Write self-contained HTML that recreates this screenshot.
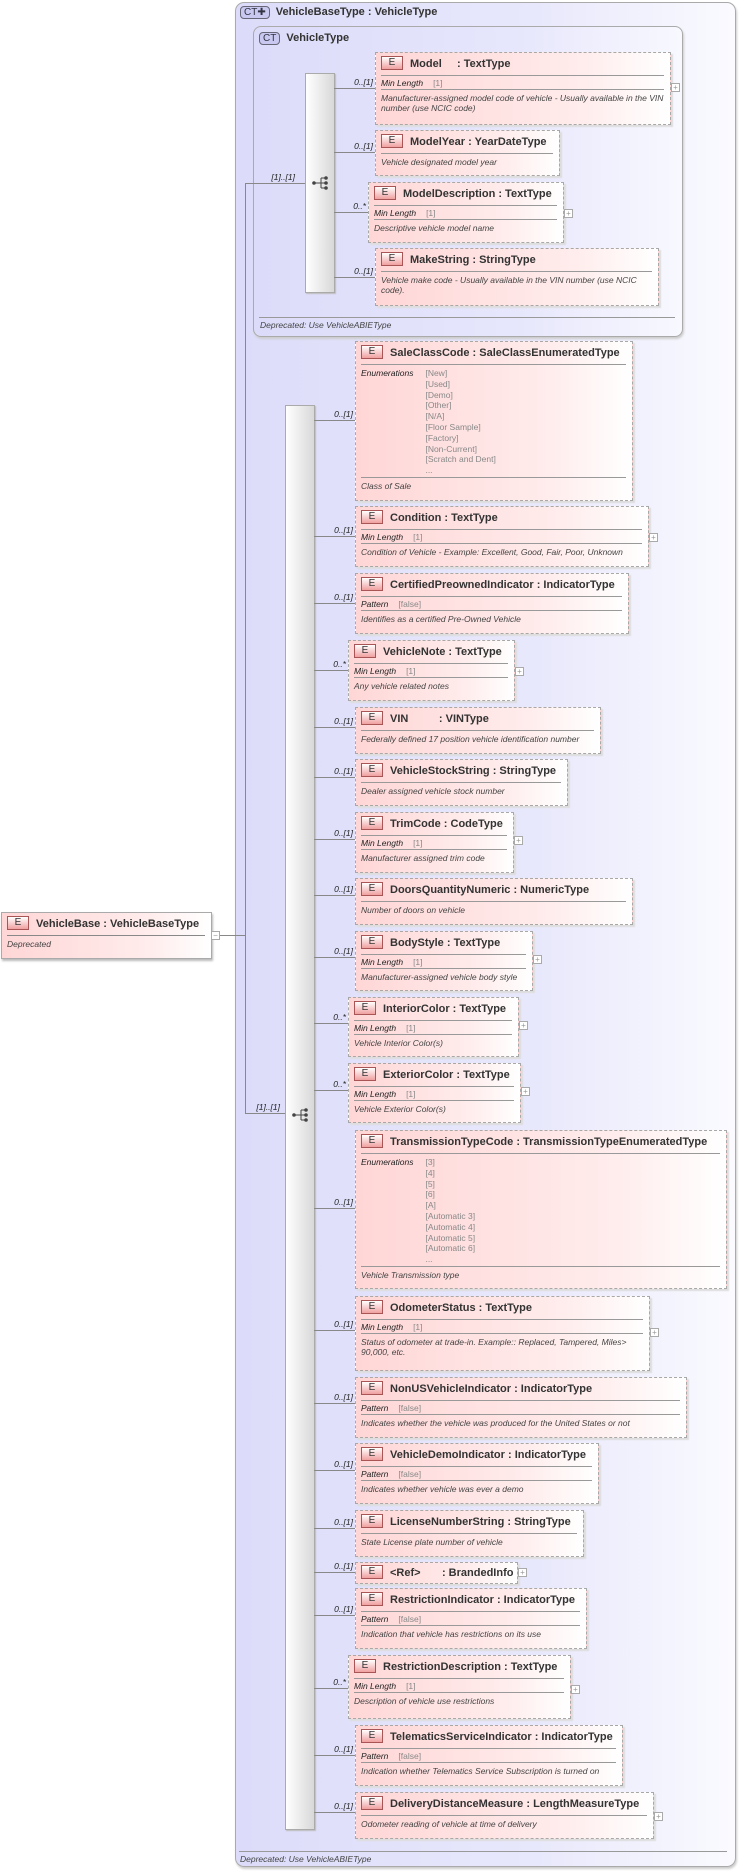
<!DOCTYPE html>
<html><head><meta charset="utf-8"><style>
body{margin:0;width:739px;height:1872px;background:#fff;position:relative;overflow:hidden;font-family:"Liberation Sans",Arial,sans-serif;color:#222}
.abs{position:absolute}
.outer{position:absolute;left:235px;top:2px;width:499px;height:1863px;border:1px solid #aaa;border-radius:9px;background:linear-gradient(to right,#dcdcfa,#e8e8fc 60%,#fafaff);box-shadow:1px 2px 2px #ccc}
.inner{position:absolute;left:253px;top:26px;width:428px;height:309px;border:1px solid #aaa;border-radius:8px;background:linear-gradient(to right,#dcdcfa,#e6e6fc 60%,#f8f8ff);box-shadow:1px 2px 2px #ccc}
.ct{position:absolute;font-size:11px;font-weight:bold;color:#333}
.ctb{display:inline-block;border:1px solid #667;border-radius:4px;background:#c8c8f0;font-weight:normal;font-size:10px;padding:0 3px;margin-right:6px;color:#334}
.bar{position:absolute;width:28px;border:1px solid #aaa;background:linear-gradient(to right,#fff,#d8d8d8);box-shadow:1px 1px 1px #bbb}
.e{position:absolute;border:1px dashed #a8a8a8;background:linear-gradient(to right,#ffd6d6,#ffecec 70%,#fff);box-shadow:2px 2px 1px #ddd;font-size:8.5px}
.h{height:22px;line-height:22px;font-size:11px;font-weight:bold;color:#333;white-space:nowrap;padding-left:5px}
.E{display:inline-block;width:20px;height:12px;line-height:12px;text-align:center;border:1px solid #a55;background:linear-gradient(#fff,#f0a0a0);font-weight:normal;font-size:10px;margin-right:7px;vertical-align:middle;position:relative;top:-1px}
.f{border-top:1px solid #999;margin:0 6px 0 5px;padding:2px 0 1px;font-style:italic;color:#222;white-space:nowrap;line-height:10px}
.f span{font-style:normal;color:#888;margin-left:10px;display:inline-block;vertical-align:top}
.d{border-top:1px solid #999;margin:0 6px 0 5px;padding:3px 0 2px;font-style:italic;color:#444;line-height:10px}
.ln{position:absolute;background:#888}
.lb{position:absolute;font-size:8.5px;font-style:italic;width:40px;text-align:right;color:#222}
.pl{position:absolute;width:7px;height:7px;border:1px solid #aaa;background:#fff;font-size:8px;line-height:7px;text-align:center;color:#999}
.ic{position:absolute;width:20px;height:14px}
</style></head><body>

<div class="outer"></div>
<div class="ct" style="left:240px;top:6px"><span class="ctb">CT✚</span>VehicleBaseType : VehicleType</div>
<div class="inner"></div>
<div class="ct" style="left:259px;top:32px"><span class="ctb">CT</span>VehicleType</div>
<div class="abs" style="left:259px;top:317px;width:416px;border-top:1px solid #999"></div>
<div class="abs" style="left:260px;top:320px;font-size:8.5px;font-style:italic;color:#444">Deprecated: Use VehicleABIEType</div>
<div class="abs" style="left:239px;top:1851px;width:488px;border-top:1px solid #999"></div>
<div class="abs" style="left:240px;top:1854px;font-size:8.5px;font-style:italic;color:#444">Deprecated: Use VehicleABIEType</div>

<!-- VehicleBase -->
<div class="e" style="left:1px;top:912px;width:209px;height:45px;border-style:solid;border-color:#aaa;box-shadow:1px 2px 2px #bbb"><div class="h"><b class="E">E</b>VehicleBase : VehicleBaseType</div><div class="d" style="border-top-color:#888">Deprecated</div></div>
<div class="pl" style="left:211px;top:931px">−</div>
<div class="ln" style="left:220px;top:935px;width:25px;height:1px"></div>
<div class="ln" style="left:245px;top:183px;width:1px;height:931px"></div>
<div class="ln" style="left:245px;top:183px;width:60px;height:1px"></div>
<div class="ln" style="left:245px;top:1113px;width:40px;height:1px"></div>
<div class="lb" style="left:255px;top:172px">[1]..[1]</div>
<div class="lb" style="left:240px;top:1102px">[1]..[1]</div>

<div class="bar" style="left:305px;top:73px;height:218px"></div>
<div class="bar" style="left:285px;top:405px;height:1423px"></div>
<svg class="ic" style="left:311px;top:176px" viewBox="0 0 20 14"><circle cx="3" cy="7" r="1.8" fill="#444"/><line x1="3" y1="7" x2="10" y2="7" stroke="#444"/><line x1="10" y1="2" x2="10" y2="12" stroke="#444"/><line x1="10" y1="2" x2="15" y2="2" stroke="#444"/><line x1="10" y1="12" x2="15" y2="12" stroke="#444"/><line x1="10" y1="7" x2="15" y2="7" stroke="#444"/><circle cx="15" cy="2" r="1.8" fill="#444"/><circle cx="15" cy="7" r="1.8" fill="#444"/><circle cx="15" cy="12" r="1.8" fill="#444"/></svg>
<svg class="ic" style="left:291px;top:1108px" viewBox="0 0 20 14"><circle cx="3" cy="7" r="1.8" fill="#444"/><line x1="3" y1="7" x2="10" y2="7" stroke="#444"/><line x1="10" y1="2" x2="10" y2="12" stroke="#444"/><line x1="10" y1="2" x2="15" y2="2" stroke="#444"/><line x1="10" y1="12" x2="15" y2="12" stroke="#444"/><line x1="10" y1="7" x2="15" y2="7" stroke="#444"/><circle cx="15" cy="2" r="1.8" fill="#444"/><circle cx="15" cy="7" r="1.8" fill="#444"/><circle cx="15" cy="12" r="1.8" fill="#444"/></svg>

<!-- VehicleType children -->
<div class="ln" style="left:334px;top:88px;width:41px;height:1px"></div><div class="lb" style="left:333px;top:77px">0..[1]</div>
<div class="e" style="left:375px;top:52px;width:294px;height:71px"><div class="h"><b class="E">E</b>Model &nbsp;&nbsp;&nbsp; : TextType</div><div class="f">Min Length<span>[1]</span></div><div class="d">Manufacturer-assigned model code of vehicle - Usually available in the VIN number (use NCIC code)</div></div>
<div class="pl" style="left:671px;top:83px">+</div>

<div class="ln" style="left:334px;top:152px;width:41px;height:1px"></div><div class="lb" style="left:333px;top:141px">0..[1]</div>
<div class="e" style="left:375px;top:130px;width:183px;height:44px"><div class="h"><b class="E">E</b>ModelYear : YearDateType</div><div class="d">Vehicle designated model year</div></div>

<div class="ln" style="left:334px;top:212px;width:34px;height:1px"></div><div class="lb" style="left:326px;top:201px">0..*</div>
<div class="e" style="left:368px;top:182px;width:194px;height:59px"><div class="h"><b class="E">E</b>ModelDescription : TextType</div><div class="f">Min Length<span>[1]</span></div><div class="d">Descriptive vehicle model name</div></div>
<div class="pl" style="left:564px;top:209px">+</div>

<div class="ln" style="left:334px;top:277px;width:41px;height:1px"></div><div class="lb" style="left:333px;top:266px">0..[1]</div>
<div class="e" style="left:375px;top:248px;width:282px;height:56px"><div class="h"><b class="E">E</b>MakeString : StringType</div><div class="d">Vehicle make code - Usually available in the VIN number (use NCIC code).</div></div>

<!-- main sequence children -->
<div class="ln" style="left:314px;top:420px;width:41px;height:1px"></div><div class="lb" style="left:313px;top:409px">0..[1]</div>
<div class="e" style="left:355px;top:341px;width:276px;height:158px"><div class="h"><b class="E">E</b>SaleClassCode : SaleClassEnumeratedType</div><div class="f" style="padding-top:3px;line-height:10.8px">Enumerations<span style="margin-left:12px">[New]<br>[Used]<br>[Demo]<br>[Other]<br>[N/A]<br>[Floor Sample]<br>[Factory]<br>[Non-Current]<br>[Scratch and Dent]<br>...</span></div><div class="d">Class of Sale</div></div>

<div class="ln" style="left:314px;top:536px;width:41px;height:1px"></div><div class="lb" style="left:313px;top:525px">0..[1]</div>
<div class="e" style="left:355px;top:506px;width:292px;height:59px"><div class="h"><b class="E">E</b>Condition : TextType</div><div class="f">Min Length<span>[1]</span></div><div class="d">Condition of Vehicle - Example: Excellent, Good, Fair, Poor, Unknown</div></div>
<div class="pl" style="left:649px;top:533px">+</div>

<div class="ln" style="left:314px;top:603px;width:41px;height:1px"></div><div class="lb" style="left:313px;top:592px">0..[1]</div>
<div class="e" style="left:355px;top:573px;width:272px;height:59px"><div class="h"><b class="E">E</b>CertifiedPreownedIndicator : IndicatorType</div><div class="f">Pattern<span>[false]</span></div><div class="d">Identifies as a certified Pre-Owned Vehicle</div></div>

<div class="ln" style="left:314px;top:670px;width:34px;height:1px"></div><div class="lb" style="left:306px;top:659px">0..*</div>
<div class="e" style="left:348px;top:640px;width:165px;height:59px"><div class="h"><b class="E">E</b>VehicleNote : TextType</div><div class="f">Min Length<span>[1]</span></div><div class="d">Any vehicle related notes</div></div>
<div class="pl" style="left:515px;top:667px">+</div>

<div class="ln" style="left:314px;top:727px;width:41px;height:1px"></div><div class="lb" style="left:313px;top:716px">0..[1]</div>
<div class="e" style="left:355px;top:707px;width:244px;height:45px"><div class="h"><b class="E">E</b>VIN &nbsp;&nbsp;&nbsp;&nbsp;&nbsp;&nbsp;&nbsp;&nbsp; : VINType</div><div class="d">Federally defined 17 position vehicle identification number</div></div>

<div class="ln" style="left:314px;top:777px;width:41px;height:1px"></div><div class="lb" style="left:313px;top:766px">0..[1]</div>
<div class="e" style="left:355px;top:759px;width:211px;height:45px"><div class="h"><b class="E">E</b>VehicleStockString : StringType</div><div class="d">Dealer assigned vehicle stock number</div></div>

<div class="ln" style="left:314px;top:839px;width:41px;height:1px"></div><div class="lb" style="left:313px;top:828px">0..[1]</div>
<div class="e" style="left:355px;top:812px;width:157px;height:59px"><div class="h"><b class="E">E</b>TrimCode : CodeType</div><div class="f">Min Length<span>[1]</span></div><div class="d">Manufacturer assigned trim code</div></div>
<div class="pl" style="left:514px;top:836px">+</div>

<div class="ln" style="left:314px;top:895px;width:41px;height:1px"></div><div class="lb" style="left:313px;top:884px">0..[1]</div>
<div class="e" style="left:355px;top:878px;width:276px;height:45px"><div class="h"><b class="E">E</b>DoorsQuantityNumeric : NumericType</div><div class="d">Number of doors on vehicle</div></div>

<div class="ln" style="left:314px;top:957px;width:41px;height:1px"></div><div class="lb" style="left:313px;top:946px">0..[1]</div>
<div class="e" style="left:355px;top:931px;width:176px;height:58px"><div class="h"><b class="E">E</b>BodyStyle : TextType</div><div class="f">Min Length<span>[1]</span></div><div class="d">Manufacturer-assigned vehicle body style</div></div>
<div class="pl" style="left:533px;top:955px">+</div>

<div class="ln" style="left:314px;top:1023px;width:34px;height:1px"></div><div class="lb" style="left:306px;top:1012px">0..*</div>
<div class="e" style="left:348px;top:997px;width:169px;height:58px"><div class="h"><b class="E">E</b>InteriorColor : TextType</div><div class="f">Min Length<span>[1]</span></div><div class="d">Vehicle Interior Color(s)</div></div>
<div class="pl" style="left:519px;top:1021px">+</div>

<div class="ln" style="left:314px;top:1090px;width:34px;height:1px"></div><div class="lb" style="left:306px;top:1079px">0..*</div>
<div class="e" style="left:348px;top:1063px;width:171px;height:58px"><div class="h"><b class="E">E</b>ExteriorColor : TextType</div><div class="f">Min Length<span>[1]</span></div><div class="d">Vehicle Exterior Color(s)</div></div>
<div class="pl" style="left:521px;top:1087px">+</div>

<div class="ln" style="left:314px;top:1208px;width:41px;height:1px"></div><div class="lb" style="left:313px;top:1197px">0..[1]</div>
<div class="e" style="left:355px;top:1130px;width:370px;height:157px"><div class="h"><b class="E">E</b>TransmissionTypeCode : TransmissionTypeEnumeratedType</div><div class="f" style="padding-top:3px;line-height:10.8px">Enumerations<span style="margin-left:12px">[3]<br>[4]<br>[5]<br>[6]<br>[A]<br>[Automatic 3]<br>[Automatic 4]<br>[Automatic 5]<br>[Automatic 6]<br>...</span></div><div class="d">Vehicle Transmission type</div></div>

<div class="ln" style="left:314px;top:1330px;width:41px;height:1px"></div><div class="lb" style="left:313px;top:1319px">0..[1]</div>
<div class="e" style="left:355px;top:1296px;width:293px;height:73px"><div class="h"><b class="E">E</b>OdometerStatus : TextType</div><div class="f">Min Length<span>[1]</span></div><div class="d">Status of odometer at trade-in. Example:: Replaced, Tampered, Miles&gt; 90,000, etc.</div></div>
<div class="pl" style="left:650px;top:1328px">+</div>

<div class="ln" style="left:314px;top:1403px;width:41px;height:1px"></div><div class="lb" style="left:313px;top:1392px">0..[1]</div>
<div class="e" style="left:355px;top:1377px;width:330px;height:59px"><div class="h"><b class="E">E</b>NonUSVehicleIndicator : IndicatorType</div><div class="f">Pattern<span>[false]</span></div><div class="d">Indicates whether the vehicle was produced for the United States or not</div></div>

<div class="ln" style="left:314px;top:1470px;width:41px;height:1px"></div><div class="lb" style="left:313px;top:1459px">0..[1]</div>
<div class="e" style="left:355px;top:1443px;width:242px;height:59px"><div class="h"><b class="E">E</b>VehicleDemoIndicator : IndicatorType</div><div class="f">Pattern<span>[false]</span></div><div class="d">Indicates whether vehicle was ever a demo</div></div>

<div class="ln" style="left:314px;top:1528px;width:41px;height:1px"></div><div class="lb" style="left:313px;top:1517px">0..[1]</div>
<div class="e" style="left:355px;top:1510px;width:227px;height:45px"><div class="h"><b class="E">E</b>LicenseNumberString : StringType</div><div class="d">State License plate number of vehicle</div></div>

<div class="ln" style="left:314px;top:1572px;width:41px;height:1px"></div><div class="lb" style="left:313px;top:1561px">0..[1]</div>
<div class="e" style="left:355px;top:1562px;width:161px;height:20px"><div class="h" style="height:20px;line-height:20px"><b class="E">E</b>&lt;Ref&gt; &nbsp;&nbsp;&nbsp;&nbsp;&nbsp; : BrandedInfo</div></div>
<div class="pl" style="left:518px;top:1568px">+</div>

<div class="ln" style="left:314px;top:1615px;width:41px;height:1px"></div><div class="lb" style="left:313px;top:1604px">0..[1]</div>
<div class="e" style="left:355px;top:1588px;width:230px;height:59px"><div class="h"><b class="E">E</b>RestrictionIndicator : IndicatorType</div><div class="f">Pattern<span>[false]</span></div><div class="d">Indication that vehicle has restrictions on its use</div></div>

<div class="ln" style="left:314px;top:1688px;width:34px;height:1px"></div><div class="lb" style="left:306px;top:1677px">0..*</div>
<div class="e" style="left:348px;top:1655px;width:221px;height:62px"><div class="h"><b class="E">E</b>RestrictionDescription : TextType</div><div class="f">Min Length<span>[1]</span></div><div class="d">Description of vehicle use restrictions</div></div>
<div class="pl" style="left:571px;top:1685px">+</div>

<div class="ln" style="left:314px;top:1755px;width:41px;height:1px"></div><div class="lb" style="left:313px;top:1744px">0..[1]</div>
<div class="e" style="left:355px;top:1725px;width:266px;height:59px"><div class="h"><b class="E">E</b>TelematicsServiceIndicator : IndicatorType</div><div class="f">Pattern<span>[false]</span></div><div class="d">Indication whether Telematics Service Subscription is turned on</div></div>

<div class="ln" style="left:314px;top:1812px;width:41px;height:1px"></div><div class="lb" style="left:313px;top:1801px">0..[1]</div>
<div class="e" style="left:355px;top:1792px;width:297px;height:45px"><div class="h"><b class="E">E</b>DeliveryDistanceMeasure : LengthMeasureType</div><div class="d">Odometer reading of vehicle at time of delivery</div></div>
<div class="pl" style="left:654px;top:1812px">+</div>

</body></html>
